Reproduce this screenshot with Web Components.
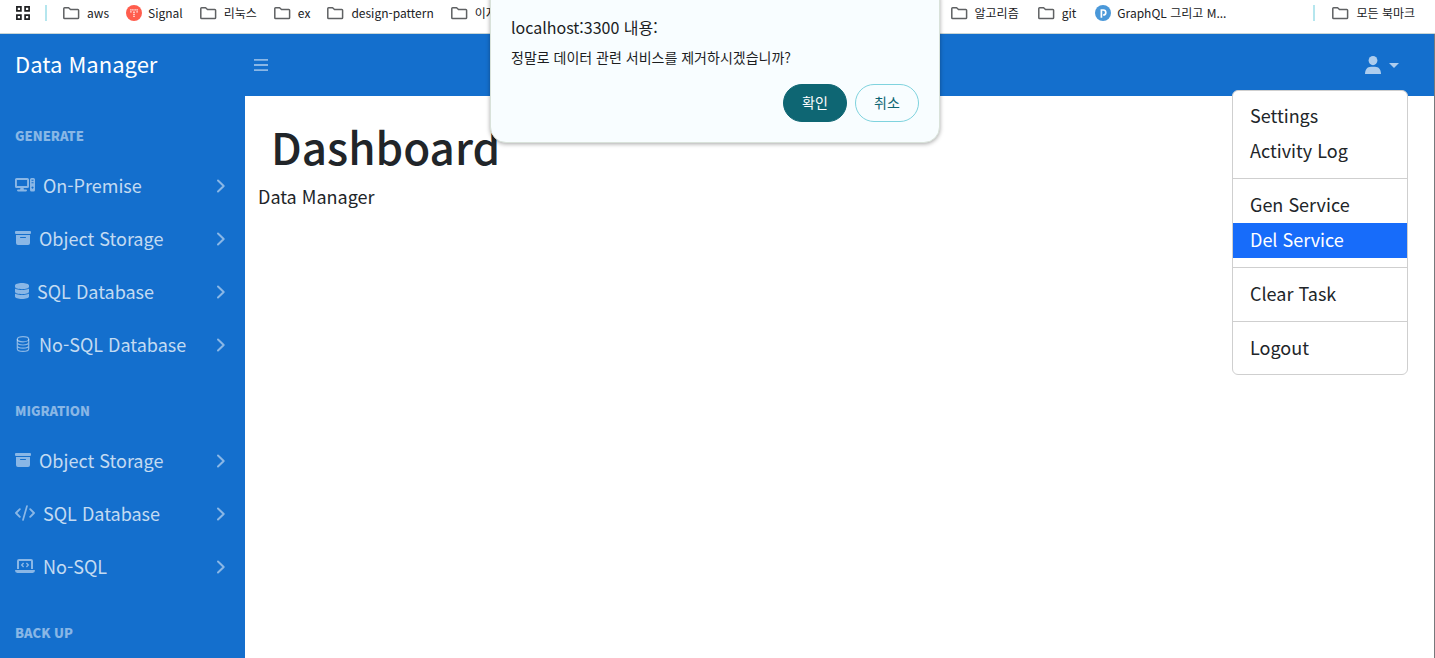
<!DOCTYPE html>
<html lang="ko">
<head>
<meta charset="utf-8">
<title>Data Manager</title>
<style>
  html, body { height: 100%; }
  body {
    margin: 0;
    overflow: hidden;
    font-family: "Noto Sans CJK KR", "Noto Sans", sans-serif;
    font-size: 18px;
    line-height: 27px;
    color: #212529;
    background: #fff;
    --brand: #146fcd;
    --soft: rgba(255, 255, 255, .5);
    --text-soft: rgba(255, 255, 255, .75);
  }
</style>
</head>
<body>
<browser-shell></browser-shell>
<script>
const ICONS = {
  folder: ['0 0 18 16', 18, 16, '<path d="M.8 3.500q0-.8.8-.8h4l1.900 1.800h7.300q.8 0 .8.8v7.400q0 .8-.8.8H1.600q-.8 0-.8-.8z" fill="none" stroke="#5f6163" stroke-width="1.500" stroke-linejoin="round"/>'],
  apps: ['0 0 14 14', 14, 14, '<g fill="none" stroke="#1f2022" stroke-width="1.7"><path d="M.9.9h4v4h-4zM9.1.9h4v4h-4zM.9 9.1h4v4h-4zM9.1 9.1h4v4h-4z"/></g>'],
  signal: ['0 0 16 16', 16, 16, '<circle cx="8" cy="8" r="8" fill="#ff5d4d"/><g fill="#fff" fill-opacity=".9"><path d="M4.200 4.200h1.400v1.200H4.200zM6.200 4.200h1.400v1.200H6.200zM8.400 4.200h1.400v1.200H8.400zM10.400 4.200h1.400v1.200h-1.400zM4.200 6.200h1.400v1.200H4.200zM10.400 6.200h1.400v1.200h-1.400zM7.300 6.600h1.400v1.300H7.300zM7.300 8.700h1.400V10H7.300zM7.300 10.800h1.400v1.300H7.300z"/></g>'],
  post: ['0 0 16 16', 16, 16, '<circle cx="8" cy="8" r="8" fill="#4a98d9"/><path d="M6.400 12.800V5H8.300a2.500 2.500 0 0 1 0 5H8.100" fill="none" stroke="#fff" stroke-width="1.700"/>'],
  computer: ['0 0 20 16', 20, 16, '<path fill-rule="evenodd" d="M1.600 1h10.800A1.600 1.600 0 0 1 14 2.600v6.900a1.600 1.600 0 0 1-1.600 1.600H8.600l.3 1.500h2.200c1.200 0 1.200 1.800 0 1.800H3c-1.300 0-1.300-1.800 0-1.800h2.100l.3-1.500H1.600A1.600 1.600 0 0 1 0 9.500V2.600A1.600 1.600 0 0 1 1.600 1ZM1.900 2.900v6.200h10.200V2.900ZM16.500 1h2A1.500 1.500 0 0 1 20 2.500v10.400a1.500 1.500 0 0 1-1.500 1.500h-2a1.500 1.500 0 0 1-1.500-1.500V2.500A1.500 1.500 0 0 1 16.500 1Zm0 1.800v1h2v-1Zm0 2.500v1h2v-1Zm1 4.200a1 1 0 1 0 .01 0Z"/>'],
  archive: ['0 0 16 16', 16, 16, '<path fill-rule="evenodd" d="M1 1h14a1 1 0 0 1 1 1v1a1 1 0 0 1-1 1H1a1 1 0 0 1-1-1V2a1 1 0 0 1 1-1ZM1 5h14v8a2 2 0 0 1-2 2H3a2 2 0 0 1-2-2Zm4 2.500a.5.500 0 0 0 .5.500h5a.5.500 0 0 0 0-1h-5a.5.500 0 0 0-.5.500Z"/>'],
  database: ['0 0 14 16', 14, 16, '<path d="M14 2.500v1.300C14 5.200 10.900 6.200 7 6.200S0 5.200 0 3.800V2.500C0 1.100 3.100 0 7 0s7 1.100 7 2.500ZM12.300 6.300c.7-.2 1.300-.5 1.700-.8v3.300c0 1.400-3.100 2.400-7 2.400s-7-1-7-2.400V5.500c.5.300 1.100.6 1.700.8 1.400.5 3.300.8 5.300.8s3.900-.3 5.300-.8ZM0 10.500c.5.300 1.100.6 1.700.8 1.400.5 3.300.8 5.300.8s3.900-.3 5.300-.8c.7-.2 1.300-.5 1.700-.8v3C14 14.900 10.900 16 7 16s-7-1.100-7-2.500Z"/>'],
  databaseLine: ['0 0 16 16', 16, 16, '<g fill="none" stroke="currentColor" stroke-width="1.200"><ellipse cx="8" cy="3.200" rx="5.700" ry="2.600"/><path d="M2.300 3.200v9.500c0 1.500 2.600 2.700 5.700 2.700s5.700-1.200 5.700-2.700V3.200M2.300 6.300C2.300 7.800 4.900 9 8 9s5.700-1.200 5.700-2.700M2.300 9.500c0 1.500 2.600 2.700 5.700 2.700s5.700-1.200 5.700-2.700"/></g>'],
  code: ['0 0 20 16', 20, 16, '<g fill="none" stroke="currentColor" stroke-width="1.900" stroke-linecap="round" stroke-linejoin="round"><path d="M4.800 4.200 1 8l3.800 3.800M15.200 4.200 19 8l-3.800 3.800"/><path stroke-width="1.700" d="M12 1 8 15"/></g>'],
  laptop: ['0 0 20 16', 20, 16, '<path fill-rule="evenodd" d="M4 1h12a2 2 0 0 1 2 2v8h-2V3H4v8H2V3a2 2 0 0 1 2-2ZM.6 12h18.800a.6.600 0 0 1 .6.600A2.400 2.400 0 0 1 17.600 15H2.400A2.400 2.400 0 0 1 0 12.600.6.600 0 0 1 .6 12Z"/><path d="M8.600 5 6.700 7l1.900 2M11.400 5l1.900 2-1.900 2" fill="none" stroke="currentColor" stroke-width="1.400"/>'],
  chevron: ['0 0 10 16', 10, 16, '<path d="M2 2.500 7.700 8 2 13.500" fill="none" stroke="currentColor" stroke-width="2" stroke-linecap="round" stroke-linejoin="round"/>'],
  bars: ['0 0 14 16', 14, 16, '<path d="M0 2h14v1.800H0zM0 7.100h14v1.800H0zM0 12.200h14V14H0z"/>'],
  user: ['0 0 16 18', 16, 18, '<ellipse cx="8" cy="4.600" rx="4.400" ry="4.600"/><path d="M0 18c0-4.500 2.300-7.300 6-7.300h4c3.700 0 6 2.800 6 7.300Z"/>'],
  caret: ['0 0 10 5', 10, 5, '<path d="M0 0h10L5 5z"/>']
};

function define(name, html, setup) {
  const template = document.createElement('template');
  template.innerHTML = html;
  customElements.define(name, class extends HTMLElement {
    constructor() {
      super();
      this.attachShadow({ mode: 'open' }).append(template.content.cloneNode(true));
    }
    connectedCallback() { if (setup) setup(this, this.shadowRoot); }
  });
}

define('ui-icon', `<style>:host{display:inline-flex;flex:none}svg{display:block;fill:currentColor}</style>`, (el, root) => {
  const [box, w, h, body] = ICONS[el.getAttribute('name')];
  root.innerHTML += `<svg viewBox="${box}" width="${w}" height="${h}" aria-hidden="true">${body}</svg>`;
});

define('bookmark-link', `<style>
  :host{display:block;flex:none}
  a{display:flex;align-items:center;gap:6px;color:#202124;text-decoration:none;white-space:nowrap;font-size:12px;line-height:16px}
</style><a href="#"><span class="mark"></span><slot></slot></a>`, (el, root) => {
  root.querySelector('.mark').outerHTML = `<ui-icon name="${el.getAttribute('icon') || 'folder'}"></ui-icon>`;
});

define('bookmark-bar', `<style>
  :host{display:flex;align-items:flex-start;gap:17px;box-sizing:border-box;height:34px;padding:5px 20px 0 16px;border-bottom:1px solid #c9d6d6;background:#fff;overflow:hidden}
  .apps{border:0;padding:0;background:none;display:flex;height:16px;align-items:center}
  hr{width:2px;height:16px;margin:0 -1px 0 -2px;border:0;background:#b5e6ee;flex:none}
  .right{display:flex;gap:19px;margin-left:auto}
  .right hr{margin-left:68px;margin-right:-2px}
</style>
<button class="apps" aria-label="Apps"><ui-icon name="apps"></ui-icon></button><hr>
<bookmark-link>aws</bookmark-link><bookmark-link icon="signal">Signal</bookmark-link><bookmark-link>리눅스</bookmark-link>
<bookmark-link>ex</bookmark-link><bookmark-link>design-pattern</bookmark-link><bookmark-link>이지</bookmark-link>
<div class="right"><bookmark-link>알고리즘</bookmark-link><bookmark-link>git</bookmark-link><bookmark-link icon="post">GraphQL 그리고 M...</bookmark-link><hr><bookmark-link>모든 북마크</bookmark-link></div>`);

define('top-bar', `<style>
  :host{display:flex;align-items:center;height:62px;background:var(--brand);color:#fff}
  a{width:239px;box-sizing:border-box;padding:0 0 4px 15px;font-size:22px;line-height:32px;color:#fff;text-decoration:none}
  button{border:0;background:none;display:flex;align-items:center;gap:8px;color:var(--soft);font:inherit}
  .toggle{padding:0 15px}
  .user{margin-left:auto;padding:0 35px 0 0;color:rgba(255,255,255,.65)}
</style><a href="#">Data Manager</a>
<button class="toggle" aria-label="Toggle sidebar"><ui-icon name="bars"></ui-icon></button>
<button class="user" aria-label="User menu" aria-expanded="true"><ui-icon name="user"></ui-icon><ui-icon name="caret"></ui-icon></button>`);

define('nav-heading', `<style>:host{display:block;padding:32px 15px 15px;font-size:13px;line-height:16px;font-weight:900;color:var(--soft)}</style><slot></slot>`);

define('nav-item', `<style>
  :host{display:block}
  a{display:flex;align-items:center;height:53px;padding:0 19px 0 15px;color:var(--text-soft);text-decoration:none}
  ui-icon{color:var(--soft);margin-bottom:2px}
  .chevron{margin-bottom:0}
  .label{margin-left:8px;flex:1}
</style><a href="#"><span class="mark"></span><span class="label"><slot></slot></span><ui-icon class="chevron" name="chevron"></ui-icon></a>`, (el, root) => {
  root.querySelector('.mark').outerHTML = `<ui-icon name="${el.getAttribute('icon')}"></ui-icon>`;
});

define('side-nav', `<style>
  :host{display:block;flex:none;width:245px;box-sizing:border-box;background:var(--brand);overflow:hidden}
</style><nav>
<nav-heading>GENERATE</nav-heading>
<nav-item icon="computer">On-Premise</nav-item><nav-item icon="archive">Object Storage</nav-item><nav-item icon="database">SQL Database</nav-item><nav-item icon="databaseLine">No-SQL Database</nav-item>
<nav-heading>MIGRATION</nav-heading>
<nav-item icon="archive">Object Storage</nav-item><nav-item icon="code">SQL Database</nav-item><nav-item icon="laptop">No-SQL</nav-item>
<nav-heading>BACK UP</nav-heading></nav>`);

define('page-content', `<style>
  :host{display:block;flex:1;padding:23px 13px}
  h1{margin:0;padding-left:13px;font-size:44px;line-height:54px;font-weight:500}
  p{margin:10px 0 0}
</style><main><h1>Dashboard</h1><p>Data Manager</p></main>`);

define('user-menu', `<style>
  :host{position:absolute;top:56px;right:26px;width:176px;box-sizing:border-box;padding:8px 0;border:1px solid #cfcfcf;border-radius:6px;background:#fff}
  a{display:block;padding:3px 17px 5px;color:#212529;text-decoration:none}
  a.active{background:#176cfa;color:#fff}
  hr{margin:9px 0;border:0;border-top:1px solid #cfcfcf}
</style>
<a href="#">Settings</a><a href="#">Activity Log</a><hr>
<a href="#">Gen Service</a><a href="#" class="active">Del Service</a><hr>
<a href="#">Clear Task</a><hr><a href="#">Logout</a>`);

define('confirm-dialog', `<style>
  :host{position:absolute;top:-16px;left:490px;width:450px;z-index:2}
  dialog{position:static;display:block;width:auto;margin:0;box-sizing:border-box;padding:30px 20px 20px;border:1px solid #d9e2da;border-radius:16px;background:#f8fdff;color:#1c1d1f;box-shadow:0 1px 4px rgba(0,0,0,.35)}
  h2{margin:0;font-size:16px;line-height:24px;font-weight:400}
  p{margin:6px 0 0;font-size:14px;line-height:24px}
  .actions{display:flex;justify-content:flex-end;gap:8px;margin-top:15px}
  button{width:64px;height:38px;padding:0 0 2px;border:1px solid #7fd3de;border-radius:19px;background:none;color:#0e6673;font:inherit;font-size:14px;line-height:20px}
  button.primary{border-color:#0e6673;background:#0e6673;color:#fff}
</style><dialog open><h2>localhost:3300 내용:</h2><p>정말로 데이터 관련 서비스를 제거하시겠습니까?</p>
<div class="actions"><button class="primary">확인</button><button>취소</button></div></dialog>`);

define('browser-shell', `<style>
  :host{display:flex;flex-direction:column;height:100%;position:relative;overflow:hidden}
  .app{position:relative;flex:1;min-height:0;display:flex;flex-direction:column;border-right:1px solid #77797c}
  .body{flex:1;min-height:0;display:flex}
</style><bookmark-bar></bookmark-bar>
<div class="app"><top-bar></top-bar><div class="body"><side-nav></side-nav><page-content></page-content></div><user-menu></user-menu></div>
<confirm-dialog></confirm-dialog>`);
</script>
</body>
</html>
